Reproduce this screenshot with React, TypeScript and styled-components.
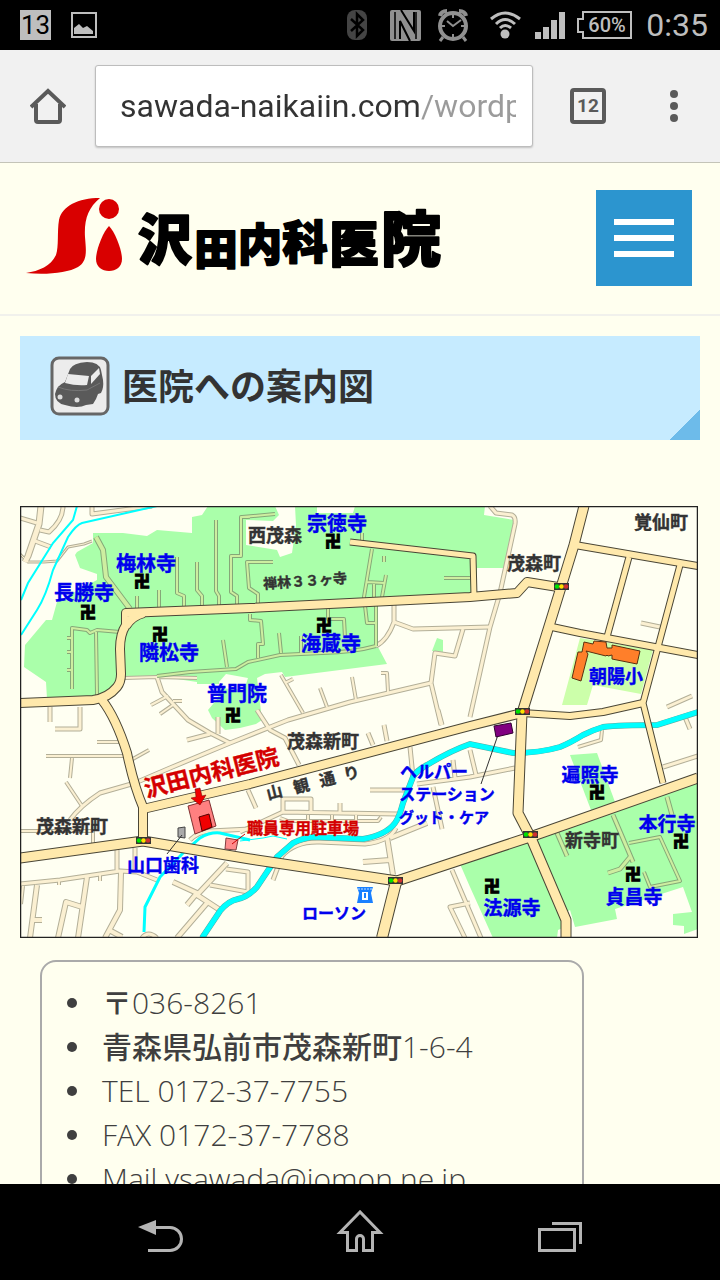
import React from "react";
import styled, { createGlobalStyle } from "styled-components";

const jp = `"Noto Sans CJK JP", sans-serif`;

const GlobalStyle = createGlobalStyle`
  * { box-sizing: border-box; }
  body { margin: 0; background: #ffffef; }
  button { border: 0; padding: 0; background: none; cursor: pointer; }
  svg { display: block; flex: none; }
`;

const Screen = styled.div`
  display: flex;
  flex-direction: column;
  height: 100vh;
  overflow: hidden;
  font-family: "Open Sans", ${jp};
  color: #3c3c3c;
`;

const StatusBar = styled.div`
  flex: none;
  display: flex;
  align-items: center;
  justify-content: space-between;
  height: 50px;
  padding: 0 12px 0 20px;
  background: #000;
  font-family: Roboto, sans-serif;
  color: #bebebe;
`;

const StatusGroup = styled.div<{ $gap: number }>`
  display: flex;
  align-items: center;
  gap: ${(p) => p.$gap}px;
  svg { overflow: visible; }
`;

const DateBadge = styled.span`
  width: 31px;
  height: 30px;
  background: #bebebe;
  color: #000;
  font: 400 26px/30px Roboto, sans-serif;
  text-align: center;
`;

const Clock = styled.time`
  font-size: 32px;
  line-height: 52px;
`;

const Toolbar = styled.div`
  flex: none;
  display: flex;
  align-items: center;
  height: 113px;
  padding: 0 32px 0 28px;
  background: #f1f1f1;
  border-bottom: 1px solid #c4c4b8;
`;

const Address = styled.label`
  flex: 1;
  min-width: 0;
  display: flex;
  height: 82px;
  margin: 0 35px 0 27px;
  padding: 0 16px 0 24px;
  background: #fff;
  border: 1px solid #bdbdbd;
  border-radius: 3px;
  box-shadow: 0 1px 2px rgba(0, 0, 0, 0.2);
`;

const AddressInput = styled.input`
  width: 100%;
  min-width: 0;
  padding: 0;
  border: 0;
  outline: 0;
  font: 400 32px/80px Roboto, sans-serif;
  background: linear-gradient(90deg, #333 300px, #9b9b9b 300px);
  background-clip: text;
  -webkit-text-fill-color: transparent;
`;

const IconButton = styled.button`
  flex: none;
  display: grid;
  place-items: center;
  width: 40px;
  height: 48px;
`;

const TabCount = styled(IconButton)`
  span {
    width: 36px;
    height: 36px;
    border: 4px solid #5a5a5a;
    border-radius: 4px;
    color: #5a5a5a;
    font: 700 19px/28px Roboto, sans-serif;
    text-align: center;
  }
`;

const MenuButton = styled(IconButton)`
  width: 12px;
  margin-left: 60px;
  margin-right: 8px;
`;

const Page = styled.main`
  flex: 1;
  min-height: 0;
  overflow: hidden;
  background: #ffffef;
`;

const SiteHeader = styled.header`
  display: flex;
  justify-content: space-between;
  align-items: flex-start;
  height: 153px;
  padding: 27px 28px 0 20px;
  border-bottom: 2px solid #f1f1ec;
`;

const Hamburger = styled.button`
  display: flex;
  flex-direction: column;
  align-items: center;
  justify-content: center;
  gap: 10px;
  width: 96px;
  height: 96px;
  && { background: #2c95cf; }
  span {
    width: 60px;
    height: 6px;
    background: #fff;
  }
`;

const Content = styled.div`
  padding: 20px;
`;

const Title = styled.h1`
  display: flex;
  align-items: flex-start;
  gap: 12px;
  height: 104px;
  margin: 0 0 66px;
  padding: 20px 30px;
  background: linear-gradient(135deg, transparent 50%, #6dbbea 50%) right bottom / 30px 30px no-repeat,
    #c6ebff;
  font: 700 36px/56px ${jp};
  color: #333;
`;

const MapFigure = styled.figure`
  margin: 0;
  max-width: 678px;
  svg {
    width: 100%;
    height: auto;
  }
`;

const ContactCard = styled.ul`
  width: 80%;
  margin: 22px 20px 0;
  padding: 19px 25px;
  list-style: none;
  border: 2px solid #aaa;
  border-radius: 16px;
`;

const ContactItem = styled.li`
  display: flex;
  align-items: center;
  gap: 25px;
  font: 300 30px/44px "Open Sans", ${jp};
  color: #3f3f3f;
  &::before {
    content: "";
    width: 10px;
    height: 10px;
    border-radius: 50%;
    background: #3f3f3f;
  }
`;

const Kanji = styled.span`
  font-weight: 500;
`;

const NavBar = styled.nav`
  flex: none;
  display: flex;
  height: 96px;
  padding: 0 60px;
  background: #000;
`;

const NavButton = styled.button`
  flex: 1;
  display: grid;
  place-items: center;
`;

/* ---------- map data ---------- */

const mainRoads: [string, number][] = [
  ["M0 197L73 194Q88 192 97 181Q101 176 101 168L100 143Q100 128 106 119L106 107L230 102L450 91L497 87L507 76L538 81", 8],
  ["M106 120Q112 110 124 107", 8],
  ["M330 36L453 50L454 90", 5],
  ["M564 0L554 39L530 117L502 207L498 307L511 332L546 414V432", 9],
  ["M555 39L678 60", 6],
  ["M609 51L587 131", 5],
  ["M660 59L638 141L623 197L643 277", 5],
  ["M532 121L560 127L678 149", 6],
  ["M502 207L550 210L583 206L623 197", 6],
  ["M123 303L230 278L450 220L502 207", 8],
  ["M82 194Q96 212 107 247Q114 280 123 301V334", 8],
  ["M0 352L123 335L230 353L377 375L510 331L678 272", 9],
  ["M376 376L362 432", 10],
];

const lanes: [string, number][] = [
  ["M21 0L19 18L8 50L5 56", 5],
  ["M0 12L17 17", 3],
  ["M43 0C43 12 36 20 29 26L20 24", 3],
  ["M15 35L31 41", 3],
  ["M0 48L8 56L24 56L37 55L48 41L64 38L72 35", 1],
  ["M72 0V8L132 0", 3],
  ["M30 201V216M60 201V223H35", 3],
  ["M77 236H100M26 250H104M52 252L50 272M111 254L129 244M46 276L62 300", 2],
  ["M50 314Q60 300 80 287L115 277L150 262L210 237L268 214L330 196L411 177", 3],
  ["M411 177L415 147L435 150L443 123M411 177L421 219", 3],
  ["M374 99V116L393 123L470 121M374 116C370 127 364 136 356 140", 3],
  ["M261 169L283 207M265 177L273 173M300 182L307 201M332 171L336 194M361 167H367L368 186", 2],
  ["M470 0L476 7L492 9Q496 11 495 18L480 87L470 121L450 211", 3],
  ["M621 117L640 121M647 201L672 190M665 211L670 223M643 261L678 250", 3],
  ["M582 224L581 234L558 241", 2],
  ["M397 278L450 271L495 262M450 244L456 269M413 281L422 323M433 254L435 272", 3],
  ["M350 284H387M390 241L393 271M348 227L353 239M364 219L367 235M418 204L422 219", 3],
  ["M237 204L250 224L265 232L279 259M228 284L236 302", 3],
  ["M263 306V293H291V305M220 326L263 306L377 308M320 297V306", 3],
  ["M260 312L268 315H358L361 311M288 309V315M312 309V315M336 309V315", 2],
  ["M253 374L262 350Q275 335 300 336L345 338Q370 335 376 322", 3],
  ["M367 331L373 369M343 356L370 354M370 332L407 317", 4],
  ["M432 364L461 432M450 397L430 401L445 432", 3],
  ["M0 378L40 374L100 365L117 366L137 374M97 344V364M115 342V364", 3],
  ["M101 366L100 404L85 432M89 424L102 431M67 371L58 432M62 401L46 396L38 432M17 379L10 432M13 414H22", 4],
  ["M39 374V379M80 369V375M3 380L1 398", 2],
  ["M0 325H73V338M73 318V330", 2],
  ["M153 376L177 387L167 399M207 357L177 389L200 404M187 397L157 432", 4],
  ["M206 363L228 366V386L190 379M122 432Q128 424 137 432", 3],
  ["M170 334Q178 326 190 325L230 323", 3],
  ["M137 171L142 186L168 214L173 217L190 227L210 237M167 234L190 228M198 211V228", 3],
  ["M131 199L148 190M140 208L153 199M153 195H162M104 172L137 171L177 172", 2],
];

const gardenPaths: [string, number][] = [
  ["M76 31L83 44L86 71L110 103", 4],
  ["M117 90V104M139 84V102", 2],
  ["M157 51V87L164 90V101M177 56V84L182 90V100M196 14V85L199 90V99", 2],
  ["M230 11H221V50H211V86L217 90V98M253 56H227L229 82L238 88V97M222 11L255 8", 2],
  ["M352 43L344 91L347 117H356M356 99V140M347 76L364 77M366 69L362 91M354 78V91M342 27V34M364 50V56M424 72H450", 2],
  ["M356 140Q335 146 302 147L260 149L228 156L216 163L170 166L137 170M203 134L207 161", 2],
  ["M230 108V114L241 115L243 138H238V152M259 127L261 147M308 103V113H324L325 132M281 130V147", 2],
  ["M52 183V122L67 124L70 127L77 124L100 126M47 132H52M47 146H52M47 164H52M76 126L77 189", 2],
  ["M593 309L613 356M610 351L600 363L588 367M537 327L547 350M647 291L652 309", 3],
  ["M609 337L640 331L660 375L630 381L624 366", 2],
];

const greenAreas = [
  "M27 193L26 176L4 161L5 139L26 114H32L37 96L58 84L77 74V68L60 62L55 49L57 46L73 37V27H103L127 30L137 24L172 27V11L182 9L188 0H465L464 9L494 14L485 62H457V92L356 100L358 141L367 158L265 171L262 166L245 168L237 172L240 197L242 214L236 218L220 222L205 224L192 212L188 204L198 192L200 178H177V176L137 170L104 174L95 188L73 193Z",
  "M440 358L508 335L543 412V422L538 424L537 432H473L450 381Z",
  "M517 334L678 277V423L664 428V420L653 419V408L672 406L663 381L595 403L597 413L555 421L550 404L545 407Z",
  "M550 249L577 247L595 296L571 304Z",
  "M417 132L423 134V146L412 145Z",
];

const riverPath =
  "M678 206L637 219Q600 219 583 221Q573 224 563 229Q550 237 540 241Q520 247 493 247L450 238Q430 245 407 259Q396 265 393 271L383 297Q379 312 375 317Q366 329 343 333L293 331Q283 332 273 337L257 351L237 381Q228 391 218 393Q208 395 200 405L182 432";

type Tone = "blue" | "dark" | "red";
const tones: Record<Tone, string> = { blue: "#0000ee", dark: "#333333", red: "#d40000" };

const labels: { t: string; x: number; y: number; s: number; c: Tone; r?: number }[] = [
  { t: "梅林寺", x: 126, y: 56, s: 20, c: "blue" },
  { t: "長勝寺", x: 64, y: 85, s: 20, c: "blue" },
  { t: "隣松寺", x: 149, y: 145, s: 20, c: "blue" },
  { t: "普門院", x: 217, y: 186, s: 20, c: "blue" },
  { t: "宗徳寺", x: 317, y: 16, s: 20, c: "blue" },
  { t: "海蔵寺", x: 311, y: 136, s: 20, c: "blue" },
  { t: "朝陽小", x: 596, y: 169, s: 18, c: "blue" },
  { t: "遍照寺", x: 570, y: 267, s: 19, c: "blue" },
  { t: "本行寺", x: 647, y: 316, s: 19, c: "blue" },
  { t: "貞昌寺", x: 614, y: 389, s: 19, c: "blue" },
  { t: "法源寺", x: 492, y: 400, s: 19, c: "blue" },
  { t: "山口歯科", x: 143, y: 358, s: 18, c: "blue" },
  { t: "ローソン", x: 314, y: 406, s: 16, c: "blue" },
  { t: "ヘルパー", x: 414, y: 264, s: 17, c: "blue" },
  { t: "ステーション", x: 427, y: 287, s: 16, c: "blue" },
  { t: "グッド・ケア", x: 424, y: 310, s: 15, c: "blue" },
  { t: "西茂森", x: 255, y: 28, s: 18, c: "dark" },
  { t: "禅林３３ヶ寺", x: 285, y: 74, s: 14, c: "dark", r: -4 },
  { t: "茂森町", x: 514, y: 56, s: 18, c: "dark" },
  { t: "覚仙町", x: 641, y: 15, s: 18, c: "dark" },
  { t: "茂森新町", x: 52, y: 319, s: 18, c: "dark" },
  { t: "茂森新町", x: 303, y: 234, s: 18, c: "dark" },
  { t: "新寺町", x: 572, y: 333, s: 18, c: "dark" },
  { t: "山", x: 254, y: 285, s: 16, c: "dark", r: -14 },
  { t: "観", x: 281, y: 279, s: 16, c: "dark", r: -14 },
  { t: "通", x: 307, y: 272, s: 16, c: "dark", r: -14 },
  { t: "り", x: 331, y: 266, s: 16, c: "dark", r: -14 },
  { t: "沢田内科医院", x: 191, y: 265, s: 23, c: "red", r: -14 },
  { t: "職員専用駐車場", x: 283, y: 321, s: 16, c: "red" },
];

const temples = [
  [122, 74], [68, 105], [140, 127], [313, 34], [304, 118],
  [213, 208], [577, 285], [661, 334], [613, 367], [472, 379],
];

const signals = [[541, 81], [502, 206], [123, 335], [375, 375], [510, 329]];

const MapLabel = styled.text<{ $size: number; $tone: Tone }>`
  font: 700 ${(p) => p.$size}px ${jp};
  fill: ${(p) => tones[p.$tone]};
  stroke: ${(p) => tones[p.$tone]};
  stroke-width: 0.4px;
  text-anchor: middle;
  dominant-baseline: central;
`;

const TempleMark = styled.text`
  font: 900 16px ${jp};
  fill: #000;
  stroke: #000;
  stroke-width: 1px;
  text-anchor: middle;
  dominant-baseline: central;
`;

function Roads({ items, edge, fill, border }: { items: [string, number][]; edge: string; fill: string; border: number }) {
  return (
    <g fill="none" strokeLinejoin="round">
      {items.map(([d, w]) => (
        <path key={d} d={d} stroke={edge} strokeWidth={w + border} />
      ))}
      {items.map(([d, w]) => (
        <path key={d} d={d} stroke={fill} strokeWidth={w} />
      ))}
    </g>
  );
}

function AreaMap() {
  return (
    <svg viewBox="0 0 678 432" role="img" aria-label="沢田内科医院 周辺地図">
      <rect width="678" height="432" fill="#fffff2" />
      {greenAreas.map((d) => (
        <path key={d} d={d} fill="#aaffaa" />
      ))}
      <path d="M226 14L253 15L259 9L255 0H275L276 19L272 47L260 51L257 44L226 39ZM297 0H335L333 7H297ZM199 176L206 168L228 172L224 184L200 182Z" fill="#fffff2" />
      <path d="M560 132L633 144L621 188L573 179L567 199H542Z" fill="#ccffaa" />
      <Roads items={lanes} edge="#b3af98" fill="#fbf0d2" border={2} />
      <Roads items={gardenPaths} edge="#85a878" fill="#cdeea0" border={2} />
      <g fill="none" stroke="#00ffff">
        <path d="M57 0L53 14L33 37L8 77L1 94" strokeWidth="2" />
        <path d="M137 0L62 17Q56 19 48 31L33 64Q26 90 17 104L1 129" strokeWidth="2" />
        <path d={riverPath} stroke="#58a8a0" strokeWidth="6" />
        <path d={riverPath} strokeWidth="5" />
        <path d="M230 334L200 327Q190 326 180 332L163 347L140 371L125 401L124 426" strokeWidth="3" />
        <path d="M220 335L243 332L253 330L267 333" strokeWidth="1" />
      </g>
      <Roads items={mainRoads} edge="#4a4636" fill="#ffe9ac" border={2} />

      <g stroke="#5a3010" strokeWidth="1" fill="#ff7f2a">
        <path d="M564 136L573 138L574 135L586 136L587 142H592V139L620 145L617 158L592 153V149L588 150L587 149L586 150L566 145L568 148L561 175L552 172L558 146H562Z" />
      </g>
      <path d="M168 300L189 294L196 320L175 328Z" fill="#ff8080" stroke="#803030" />
      <path d="M179 311L189 308L192 321L182 325Z" fill="#f00000" stroke="#500" />
      <path d="M175 283L180 282L182 290L186 289L180 299L171 292L176 291Z" fill="#f00000" stroke="#600" strokeWidth="0.5" />
      <path d="M206 332L218 334L216 344L205 343Z" fill="#ff8c8c" stroke="#804040" />
      <path d="M212 338L225 328" stroke="#c00" />
      <path d="M158 322L165 321V332L158 331Z" fill="#aaa" stroke="#444" />
      <path d="M162 329L147 348M479 226L461 278" stroke="#333" />
      <path d="M474 220L491 217L493 227L476 231Z" fill="#800080" stroke="#300030" />

      <g fill="#1a80ff">
        <path d="M337 381H353L351 387L353 397H337L339 387Z" />
        <path d="M342 386H348V394H342Z" fill="#fff" />
        <path d="M344 387H346V392H344Z" />
        <path d="M338 383H352" stroke="#bfe0ff" strokeDasharray="2 1" />
      </g>

      {signals.map(([x, y]) => (
        <g key={`${x}-${y}`}>
          <rect x={x - 7} y={y - 4} width="15" height="7" fill="#333" />
          <circle cx={x - 4} cy={y - 0.5} r="2.3" fill="#00e000" />
          <circle cx={x + 0.5} cy={y - 0.5} r="2.3" fill="#ffe000" />
          <circle cx={x + 5} cy={y - 0.5} r="2.3" fill="#d03030" />
        </g>
      ))}
      {temples.map(([x, y]) => (
        <TempleMark key={`${x}-${y}`} x={x} y={y}>卍</TempleMark>
      ))}
      {labels.map((l) => (
        <MapLabel
          key={`${l.t}-${l.x}`}
          x={l.x}
          y={l.y}
          $size={l.s}
          $tone={l.c}
          transform={l.r ? `rotate(${l.r} ${l.x} ${l.y})` : undefined}
        >
          {l.t}
        </MapLabel>
      ))}
      <rect x="0.5" y="0.5" width="677" height="431" fill="none" stroke="#222" strokeWidth="1.5" />
    </svg>
  );
}

const LogoText = styled.text<{ $size: number }>`
  font: 900 ${(p) => p.$size}px ${jp};
  fill: #000;
  stroke: #000;
  stroke-width: 2px;
  stroke-linejoin: round;
  text-anchor: middle;
  dominant-baseline: central;
`;

function Logo() {
  const letters: [string, number, number, number][] = [
    ["沢", 145, 46, 54],
    ["田", 196, 56, 43],
    ["内", 240, 52, 44],
    ["科", 285, 49, 45],
    ["医", 334, 50, 49],
    ["院", 391, 44, 60],
  ];
  return (
    <svg width="430" height="92" viewBox="0 0 430 92" role="img" aria-label="沢田内科医院">
      <g fill="#d90000">
        <path d="M80 8C58 8 42 16 39 30C37 42 39 56 36 65C31 76 19 81 6 83C26 85 48 83 58 77C68 71 66 60 65 47C64 30 68 18 80 8Z" />
        <circle cx="89" cy="19" r="10" />
        <path d="M89 36C95 42 102 60 102 69C102 77 96 81 89 81C82 81 76 77 76 69C76 60 83 42 89 36Z" />
      </g>
      {letters.map(([t, x, y, s]) => (
        <LogoText key={t} x={x} y={y} $size={s}>{t}</LogoText>
      ))}
    </svg>
  );
}

function CarIcon() {
  return (
    <svg width="60" height="60" viewBox="0 0 60 60" aria-hidden="true">
      <rect x="2" y="2" width="56" height="56" rx="7" fill="#ececec" stroke="#666" strokeWidth="3" />
      <path d="M5 38Q7 29 15 26L20 13Q23 7 37 6Q49 6 51 14L53 24Q54 32 51 37L48 38L46 43L43 48L36 49Q28 53 15 49Q5 47 5 38Z" fill="#5a5a5a" />
      <path d="M18 18L39 20L37 29Q26 30 15 27Z" fill="#ececec" />
      <path d="M41 20L49 12L50 18L41 28Z" fill="#ececec" />
      <path d="M8 31Q20 36 37 34L50 27" fill="none" stroke="#777" strokeWidth="1" />
      <circle cx="10" cy="41" r="2.5" fill="#ddd" />
      <circle cx="27" cy="44" r="2.5" fill="#ddd" />
    </svg>
  );
}

export default function App() {
  return (
    <Screen>
      <GlobalStyle />
      <StatusBar>
        <StatusGroup $gap={20}>
          <DateBadge>13</DateBadge>
          <svg width="26" height="26" viewBox="0 0 26 26" aria-hidden="true">
            <rect x="1" y="1" width="24" height="24" fill="none" stroke="#bebebe" strokeWidth="2" />
            <path d="M3 22V16L8 12L12 16L16 14L22 19V22Z" fill="#bebebe" />
          </svg>
        </StatusGroup>
        <StatusGroup $gap={14}>
          <svg width="29" height="32" viewBox="0 0 29 32" aria-hidden="true">
            <rect y="1" width="20" height="30" rx="8" fill="#444" />
            <path d="M4 10L16 21L10 27V5L16 11L4 22" fill="none" stroke="#000" strokeWidth="2.5" />
          </svg>
          <svg width="34" height="32" viewBox="0 0 34 32" aria-hidden="true">
            <rect y="1" width="31" height="31" rx="2" fill="#909090" />
            <path d="M5 3Q5 16 5 30M26 3V30" stroke="#000" strokeWidth="1.5" fill="none" />
            <path d="M11 1L24 22V3M20 32L10 12V30" fill="none" stroke="#000" strokeWidth="2" />
          </svg>
          <svg width="38" height="34" viewBox="0 0 38 34" fill="none" stroke="#909090" aria-hidden="true">
            <circle cx="15" cy="18" r="13" strokeWidth="4" />
            <path d="M2 8Q3 3 9 3M28 8Q27 3 21 3" strokeWidth="4" />
            <path d="M5 29L2 33M25 29L28 33" strokeWidth="3" />
            <path d="M9 13L15 18L23 12M15 7V10M15 26V29M4 18H7M23 18H26" strokeWidth="2" />
          </svg>
          <svg width="31" height="30" viewBox="0 0 31 30" fill="none" stroke="#bebebe" strokeWidth="3" aria-hidden="true">
            <path d="M1 9Q15 -3 30 9M6 14Q15 5 25 14M10 18Q15 13 21 18" />
            <circle cx="15" cy="24" r="4.5" fill="#bebebe" stroke="none" />
          </svg>
          <svg width="28" height="28" viewBox="0 0 28 28" fill="#bebebe" aria-hidden="true">
            <path d="M0 21H6V28H0ZM8 16H14V28H8ZM16 9H22V28H16ZM24 1H30V28H24Z" />
          </svg>
          <svg width="55" height="28" viewBox="0 0 55 28" aria-hidden="true">
            <path d="M6 1H54V27H6V21H1V8H6Z" fill="none" stroke="#bebebe" strokeWidth="2" />
            <text x="30" y="21" textAnchor="middle" fontFamily="Roboto, sans-serif" fontWeight="500" fontSize="20" fill="#bebebe">60%</text>
          </svg>
          <Clock>0:35</Clock>
        </StatusGroup>
      </StatusBar>

      <Toolbar>
        <IconButton aria-label="ホーム">
          <svg width="36" height="36" viewBox="0 0 36 36" fill="none" stroke="#5a5a5a" strokeWidth="4" aria-hidden="true">
            <path d="M1 19L18 3L35 19M6 16V32Q6 34 8 34H28Q30 34 30 32V16" />
          </svg>
        </IconButton>
        <Address>
          <AddressInput aria-label="アドレス" defaultValue="sawada-naikaiin.com/wordpress" />
        </Address>
        <TabCount aria-label="タブ"><span>12</span></TabCount>
        <MenuButton aria-label="メニュー">
          <svg width="10" height="34" viewBox="0 0 10 34" fill="#5a5a5a" aria-hidden="true">
            <circle cx="5" cy="5" r="4" /><circle cx="5" cy="17" r="4" /><circle cx="5" cy="29" r="4" />
          </svg>
        </MenuButton>
      </Toolbar>

      <Page>
        <SiteHeader>
          <Logo />
          <Hamburger aria-label="メニューを開く"><span /><span /><span /></Hamburger>
        </SiteHeader>
        <Content>
          <Title><CarIcon />医院への案内図</Title>
          <MapFigure><AreaMap /></MapFigure>
          <ContactCard>
            <ContactItem><span><Kanji>〒</Kanji>036-8261</span></ContactItem>
            <ContactItem><span><Kanji>青森県弘前市茂森新町</Kanji>1-6-4</span></ContactItem>
            <ContactItem>TEL 0172-37-7755</ContactItem>
            <ContactItem>FAX 0172-37-7788</ContactItem>
            <ContactItem>Mail ysawada@jomon.ne.jp</ContactItem>
          </ContactCard>
        </Content>
      </Page>

      <NavBar>
        <NavButton aria-label="戻る">
          <svg width="48" height="48" viewBox="0 0 48 48" aria-hidden="true">
            <path d="M2 19L20 12V27Z" fill="#b4b4b4" />
            <path d="M18 19.5H34A11.5 11.5 0 0 1 34 42.5H12" fill="none" stroke="#b4b4b4" strokeWidth="3" />
          </svg>
        </NavButton>
        <NavButton aria-label="ホーム画面">
          <svg width="48" height="48" viewBox="0 0 48 48" aria-hidden="true">
            <path d="M24 4L4 24.5H11.5V42.5H20.5V31A3.5 3.5 0 0 1 27.5 31V42.5H36.5V24.5H44Z" fill="none" stroke="#b4b4b4" strokeWidth="3" />
          </svg>
        </NavButton>
        <NavButton aria-label="最近のアプリ">
          <svg width="48" height="48" viewBox="0 0 48 48" fill="none" stroke="#b4b4b4" strokeWidth="3" aria-hidden="true">
            <path d="M3.5 21.5H38.5V42.5H3.5ZM16 15.5H44.5V36" />
          </svg>
        </NavButton>
      </NavBar>
    </Screen>
  );
}
